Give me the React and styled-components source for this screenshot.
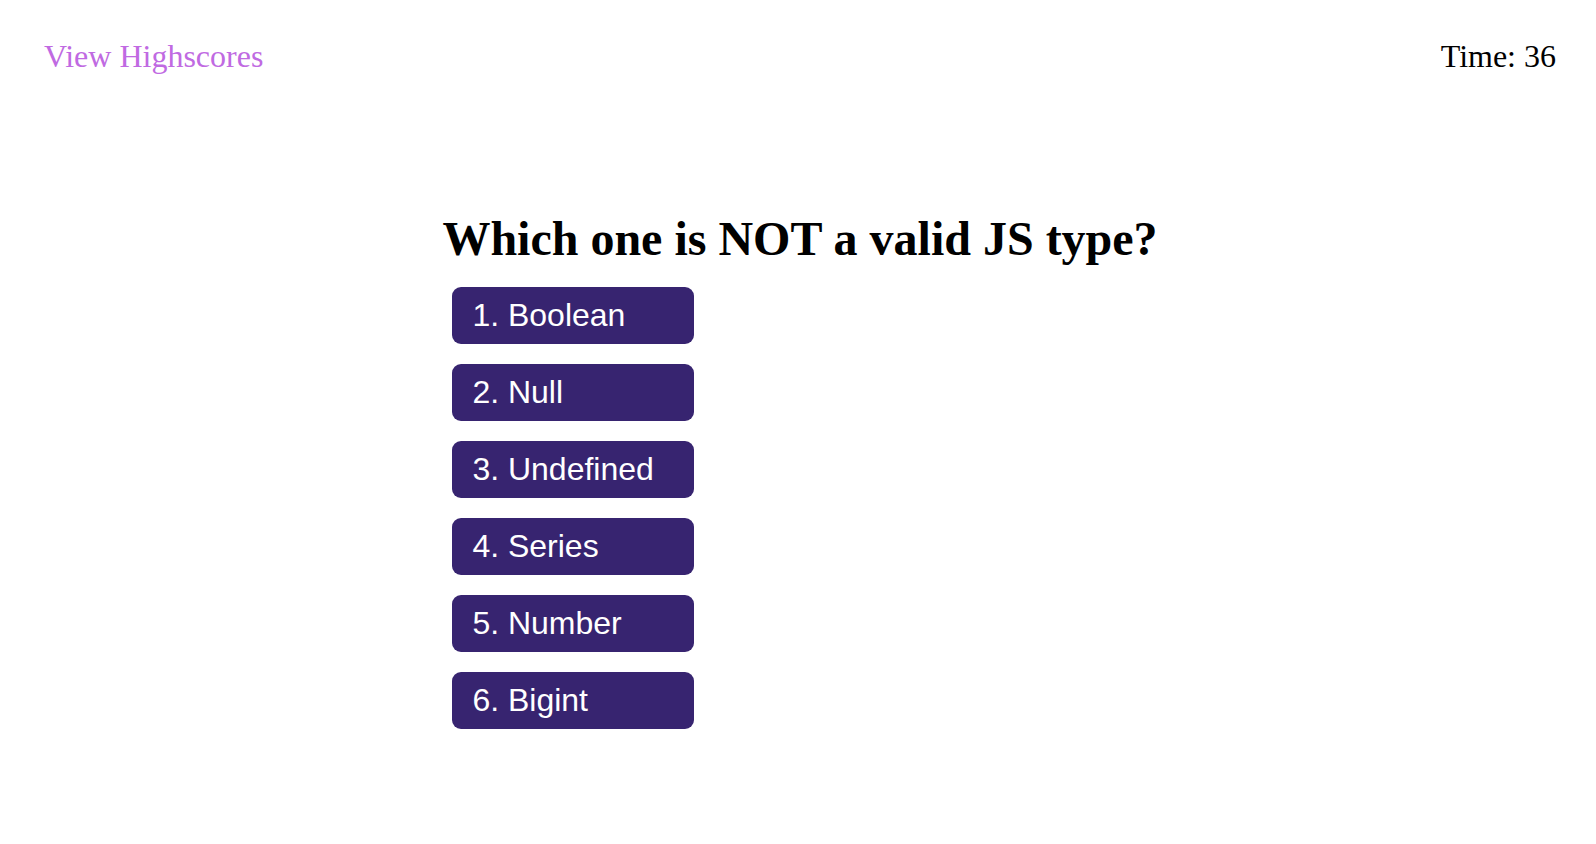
import React from "react";
import styled, { createGlobalStyle } from "styled-components";

const GlobalStyle = createGlobalStyle`
  body {
    margin: 0;
    background: #ffffff;
    font-family: "Liberation Serif", "Times New Roman", serif;
  }
`;

const choices = ["Boolean", "Null", "Undefined", "Series", "Number", "Bigint"];

const App = () => {
  return (
    <>
      <GlobalStyle />
      <Header>
        <HighscoreLink href="#">View Highscores</HighscoreLink>
        <Timer>Time: 36</Timer>
      </Header>
      <Main>
        <Quiz>
          <Question>Which one is NOT a valid JS type?</Question>
          <ChoiceList>
            {choices.map((choice, index) => (
              <ChoiceButton key={choice}>
                {index + 1}. {choice}
              </ChoiceButton>
            ))}
          </ChoiceList>
        </Quiz>
      </Main>
    </>
  );
};

export default App;

const Header = styled.header`
  display: flex;
  justify-content: space-between;
  align-items: center;
  padding: 38px 40px 0 44px;
  font-size: 32px;
  line-height: 36px;
`;

const HighscoreLink = styled.a`
  color: #c06ae2;
  text-decoration: none;
`;

const Timer = styled.div`
  color: #000000;
`;

const Main = styled.main`
  display: flex;
  justify-content: center;
  padding-top: 137px;
`;

const Quiz = styled.section`
  display: flex;
  flex-direction: column;
  align-items: flex-start;
  padding-left: 4px;
`;

const Question = styled.h1`
  margin: 0 0 20px 0;
  font-size: 48px;
  line-height: 56px;
  font-weight: bold;
`;

const ChoiceList = styled.div`
  display: flex;
  flex-direction: column;
  gap: 20px;
  padding-left: 10px;
`;

const ChoiceButton = styled.button`
  width: 242px;
  height: 57px;
  padding: 0 20px;
  border: none;
  border-radius: 9px;
  background: #372470;
  color: #ffffff;
  font-family: "Liberation Sans", Arial, Helvetica, sans-serif;
  font-size: 32px;
  text-align: left;
  cursor: pointer;
`;
